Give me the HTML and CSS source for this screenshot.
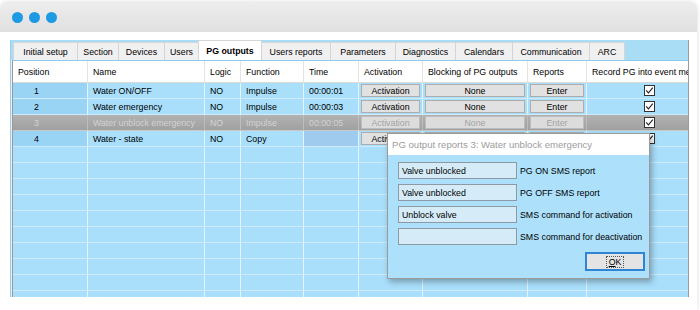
FILE: index.html
```html
<!DOCTYPE html>
<html lang="en">
<head>
  <meta charset="UTF-8">
  <title>PG outputs</title>
  <link rel="stylesheet" href="styles.css">
</head>
<body>
  <div class="window">
    <div class="topbar">
      <span class="dot"></span>
      <span class="dot"></span>
      <span class="dot"></span>
    </div>

    <div class="content">
      <div class="panel">
        <div class="tabs">
          <div class="tab">Initial setup</div>
          <div class="tab">Section</div>
          <div class="tab">Devices</div>
          <div class="tab">Users</div>
          <div class="tab active">PG outputs</div>
          <div class="tab">Users reports</div>
          <div class="tab">Parameters</div>
          <div class="tab">Diagnostics</div>
          <div class="tab">Calendars</div>
          <div class="tab">Communication</div>
          <div class="tab">ARC</div>
        </div>

        <div class="table" id="table">
          <div class="row head">
            <div class="cell">Position</div>
            <div class="cell">Name</div>
            <div class="cell">Logic</div>
            <div class="cell">Function</div>
            <div class="cell">Time</div>
            <div class="cell">Activation</div>
            <div class="cell">Blocking of PG outputs</div>
            <div class="cell">Reports</div>
            <div class="cell">Record PG into event memory</div>
          </div>
        </div>
      </div>
    </div>

    <div class="dialog">
      <div class="dialog-title">PG output reports 3: Water unblock emergency</div>
      <div class="dialog-body">
        <div class="field"><div class="input">Valve unblocked</div><span>PG ON SMS report</span></div>
        <div class="field"><div class="input">Valve unblocked</div><span>PG OFF SMS report</span></div>
        <div class="field"><div class="input">Unblock valve</div><span>SMS command for activation</span></div>
        <div class="field"><div class="input"></div><span>SMS command for deactivation</span></div>
        <div class="actions"><div class="ok"><span class="ok-focus"><u>O</u>K</span></div></div>
      </div>
    </div>
  </div>

  <script>
    const outputs = [
      { pos: 1, name: 'Water ON/OFF', logic: 'NO', func: 'Impulse', time: '00:00:01' },
      { pos: 2, name: 'Water emergency', logic: 'NO', func: 'Impulse', time: '00:00:03' },
      { pos: 3, name: 'Water unblock emergency', logic: 'NO', func: 'Impulse', time: '00:00:05', disabled: true },
      { pos: 4, name: 'Water - state', logic: 'NO', func: 'Copy', time: '', selected: true }
    ];

    const checkSvg = '<svg class="check" width="11" height="11" viewBox="0 0 11 11">' +
      '<rect x="0.5" y="0.5" width="10" height="10" fill="#fff" stroke="#333"/>' +
      '<path d="M2.2 5.4 L4.4 7.8 L8.8 2.6" fill="none" stroke="#222" stroke-width="1.1"/></svg>';

    const table = document.getElementById('table');

    outputs.forEach(o => {
      const row = document.createElement('div');
      row.className = 'row' + (o.disabled ? ' disabled' : '');
      row.innerHTML =
        `<div class="cell pos">${o.pos}</div>` +
        `<div class="cell">${o.name}</div>` +
        `<div class="cell">${o.logic}</div>` +
        `<div class="cell">${o.func}</div>` +
        `<div class="cell${o.selected ? ' selected' : ''}">${o.time}</div>` +
        `<div class="cell btn-cell"><div class="btn">Activation</div></div>` +
        `<div class="cell btn-cell"><div class="btn">None</div></div>` +
        `<div class="cell btn-cell"><div class="btn">Enter</div></div>` +
        `<div class="cell center">${checkSvg}</div>`;
      table.appendChild(row);
    });

    for (let i = 0; i < 10; i++) {
      const row = document.createElement('div');
      row.className = 'row';
      row.innerHTML = '<div class="cell"></div>'.repeat(9);
      table.appendChild(row);
    }
  </script>
</body>
</html>
```

FILE: styles.css
```css
* {
  box-sizing: border-box;
}
body {
  margin: 0;
  background: #ffffff;
  font-family: "Liberation Sans", Arial, sans-serif;
  font-size: 8.8px;
  color: #000;
  overflow: hidden;
}
.window {
  position: relative;
  width: 697px;
  height: 308px;
  margin-top: 2px;
  border-radius: 7px 7px 0 0;
  box-shadow: 0 0 5px rgba(0, 0, 0, 0.14);
  background: #ffffff;
}
.topbar {
  height: 30px;
  display: flex;
  align-items: center;
  gap: 6px;
  padding-left: 12px;
  background: linear-gradient(#ededed, #e0e0e0);
  border-radius: 7px 7px 0 0;
}
.dot {
  width: 11px;
  height: 11px;
  border-radius: 50%;
  background: #1d9ae4;
}
.content {
  padding: 8px 0 0 10px;
}
.panel {
  width: 679px;
  border-left: 1px solid #96cfee;
  border-right: 1px solid #9a9a9a;
  background: #eeeeee;
}
.tabs {
  height: 20px;
  display: flex;
  align-items: flex-end;
  padding-left: 2px;
  background: #a9dcf5;
}
.tab {
  height: 18px;
  display: flex;
  align-items: center;
  justify-content: center;
  margin-right: -1px;
  background: #f0f0f0;
  border: 1px solid #d5d5d5;
  border-bottom: none;
  white-space: nowrap;
}
.tab:nth-child(1) { width: 65px; }
.tab:nth-child(2) { width: 42px; }
.tab:nth-child(3) { width: 47px; }
.tab:nth-child(4) { width: 35px; }
.tab:nth-child(5) { width: 64px; }
.tab:nth-child(6) { width: 70px; }
.tab:nth-child(7) { width: 66px; }
.tab:nth-child(8) { width: 61px; }
.tab:nth-child(9) { width: 58px; }
.tab:nth-child(10) { width: 78px; }
.tab:nth-child(11) { width: 36px; }
.tab.active {
  height: 20px;
  background: #ffffff;
  font-weight: bold;
  position: relative;
  z-index: 1;
}
.table {
  height: 237px;
  margin-left: 1px;
  overflow: hidden;
  background: #a9dffb;
  border-left: 1px solid #9a9a9a;
  border-top: 1px solid #8ccaf0;
}
.row {
  display: grid;
  grid-template-columns: 75px 117px 36px 63px 55px 64px 105px 59px 126px;
  height: 16px;
}
.row.head {
  height: 22px;
  background: #ffffff;
}
.cell {
  display: flex;
  align-items: center;
  padding-left: 5px;
  white-space: nowrap;
  overflow: hidden;
  border-right: 1px solid #e2f4fd;
  border-bottom: 1px solid #cdebfa;
}
.head .cell {
  border-right-color: #e4e4e4;
  border-bottom-color: #dadada;
}
.cell.pos {
  padding-left: 21px;
  background: #9ad4f4;
}
.cell.selected {
  background: #9fcbee;
}
.cell.center {
  justify-content: center;
  padding-left: 0;
}
.cell.btn-cell {
  padding: 0 2px 0 2px;
}
.btn {
  width: 100%;
  height: 13px;
  display: flex;
  align-items: center;
  justify-content: center;
  background: #e1e1e1;
  border: 1px solid #adadad;
}
.check {
  display: block;
}
.row.disabled {
  background: linear-gradient(#b2b2b2, #9f9f9f);
  color: #d2d2d2;
}
.row.disabled .cell {
  border-right-color: #bdbdbd;
  border-bottom-color: #c9c9c9;
}
.row.disabled .cell.pos {
  background: transparent;
}
.row.disabled .btn {
  background: #dcdcdc;
  color: #a3a3a3;
  border-color: #bcbcbc;
}
.dialog {
  position: absolute;
  left: 387px;
  top: 131px;
  width: 263px;
  height: 146px;
  background: #ade0fb;
  border: 1px solid #9b9b9b;
  box-shadow: 2px 3px 6px rgba(0, 0, 0, 0.3);
  z-index: 5;
}
.dialog-title {
  height: 21px;
  display: flex;
  align-items: center;
  padding-left: 4px;
  background: #ffffff;
  color: #9c9c9c;
  font-size: 9.6px;
  white-space: nowrap;
}
.dialog-body {
  display: flex;
  flex-direction: column;
  gap: 5px;
  padding: 7px 4px 0 10px;
}
.field {
  display: flex;
  align-items: center;
  gap: 3px;
  white-space: nowrap;
}
.input {
  width: 119px;
  height: 17px;
  display: flex;
  align-items: center;
  padding-left: 3px;
  background: #d5ecf8;
  border: 1px solid #8e9aa3;
}
.actions {
  display: flex;
  justify-content: flex-end;
  margin-top: 2px;
}
.ok {
  width: 60px;
  height: 19px;
  display: flex;
  align-items: center;
  justify-content: center;
  background: #e4e4e4;
  border: 2px solid #2f84d6;
}
.ok-focus {
  padding: 0 2px;
  border: 1px dotted #555;
  line-height: 10px;
}
```
